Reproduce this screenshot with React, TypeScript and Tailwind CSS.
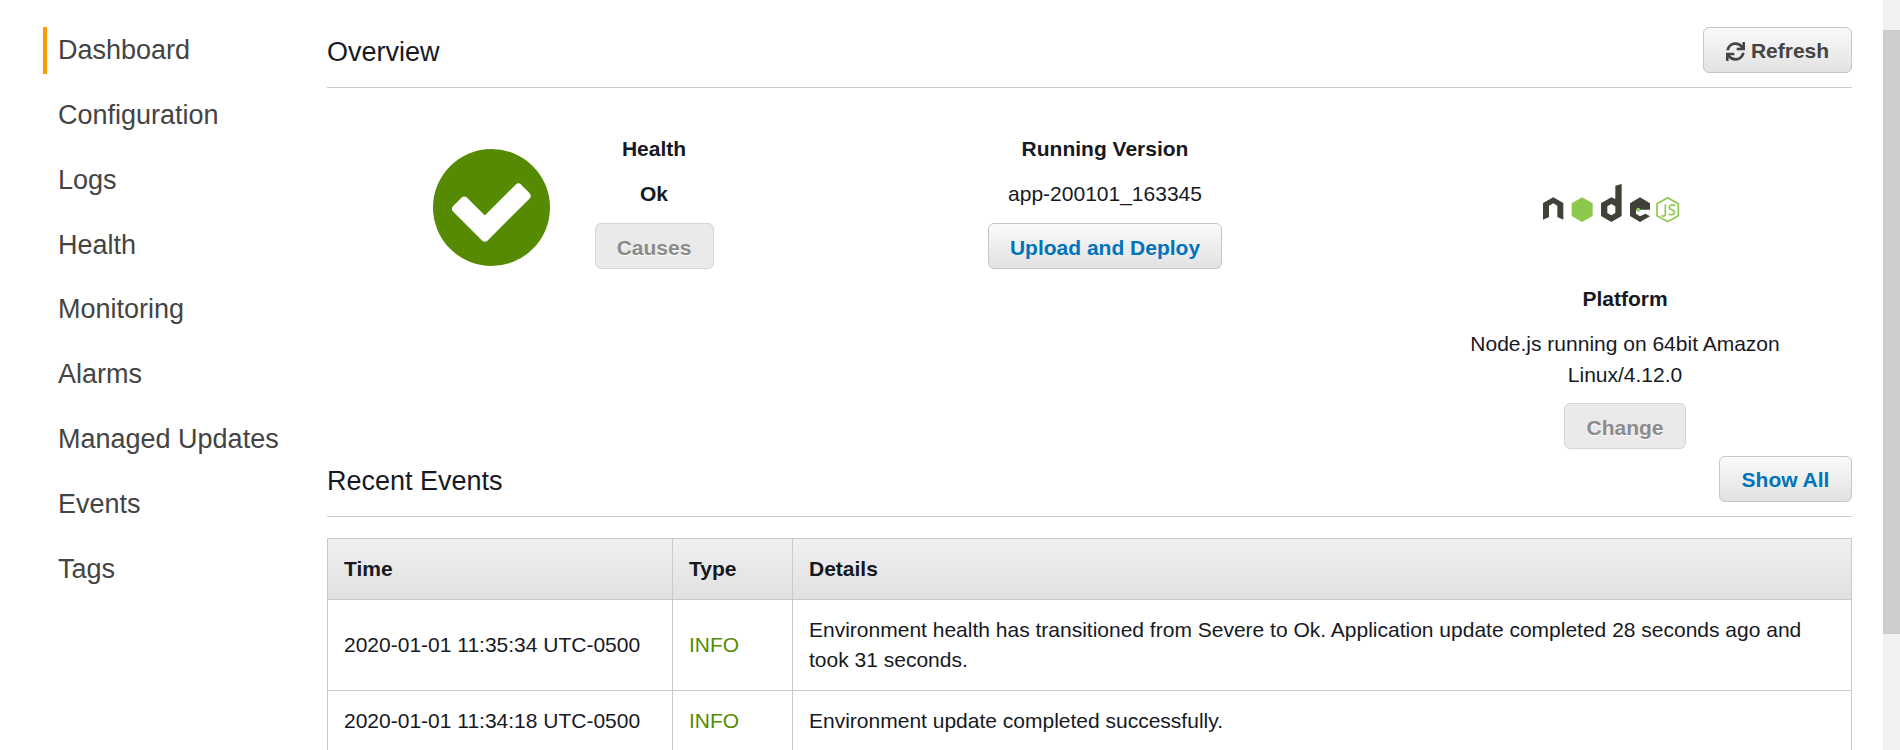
import { FaSync } from "react-icons/fa";

const navItems = ["Dashboard", "Configuration", "Logs", "Health", "Monitoring", "Alarms", "Managed Updates", "Events", "Tags"];

const events = [
    { time: "2020-01-01 11:35:34 UTC-0500", type: "INFO", details: "Environment health has transitioned from Severe to Ok. Application update completed 28 seconds ago and took 31 seconds." },
    { time: "2020-01-01 11:34:18 UTC-0500", type: "INFO", details: "Environment update completed successfully." },
];

function Button({ children, className }: { children: React.ReactNode, className: string }) {
    return (
        <button className={`h-[46px] pt-[2px] flex items-center justify-center rounded-[6px] border border-[#c6c6c6] bg-gradient-to-b from-[#fafafa] to-[#e2e2e2] text-[21px] font-bold ${className}`}>
            {children}
        </button>
    )
}

function DisabledButton({ label, className }: { label: string, className: string }) {
    return (
        <button className={`h-[46px] pt-[2px] flex items-center justify-center rounded-[6px] border border-[#d5d5d5] bg-[#eaeaea] text-[21px] font-bold text-[#8b8b8b] [text-shadow:0_1px_1px_#ffffff] ${className}`}>
            {label}
        </button>
    )
}

function HealthIcon() {
    return (
        <svg viewBox="98 88 350 350" className="w-[117px] h-[117px]">
            <circle cx="273" cy="263" r="175" fill="#568a03" />
            <polygon points="167,267 191.5,242.5 253,304 353.5,203.5 378,228 253,353" fill="#fff" stroke="#fff" strokeWidth="24" strokeLinejoin="round" />
        </svg>
    )
}

function NodeLogo() {
    return (
        <svg viewBox="120 40 420 120" className="w-[140px] h-[40px] blur-[0.4px]">
            <path d="M129 150V100L160 83L190 100V150L172 142V108L160 101L147 108V142Z" fill="#404137" />
            <path d="M246 83L278 101V139L246 157L215 139V101Z" fill="#8cc84b" />
            <path fillRule="evenodd" d="M365 43V139L334 157L303 139V101L334 83L346 88V48ZM334 103L322 110V130L334 137L346 130V110Z" fill="#404137" />
            <path d="M450 120V101L420 83L390 101V139L420 157L450 140L436 132L420 140L408 132V120Z" fill="#404137" />
            <circle cx="415" cy="120" r="6" fill="#8cc84b" />
            <path d="M503 84L535 102V138L503 156L471 138V102Z" fill="none" stroke="#8cc84b" strokeWidth="5" />
            <path d="M496 104V134Q496 142 484 138M526 108Q510 102 508 112Q508 119 517 121Q526 124 522 132Q516 138 506 133" fill="none" stroke="#8cc84b" strokeWidth="5" />
        </svg>
    )
}

function SectionHeader({ title, children }: { title: string, children: React.ReactNode }) {
    return (
        <div className="flex justify-between items-center pb-[14px] border-b border-[#cacaca]">
            <h2 className="pt-[5px] text-[27px] text-[#16191f]">{title}</h2>
            {children}
        </div>
    )
}

export default function App() {
    return (
        <div className="h-[750px] overflow-hidden flex bg-white font-['Liberation_Sans',Arial,sans-serif] text-[21px] text-[#16191f]">
            <nav className="w-[327px] shrink-0 pt-[27px] pl-[43px] flex flex-col gap-[17.8px]">
                {navItems.map((item, i) => (
                    <a key={item} className={`h-[47px] flex items-center pl-[11px] border-l-[4px] text-[27px] text-[#444] ${i === 0 ? "border-[#ff9900]" : "border-transparent"}`}>
                        {item}
                    </a>
                ))}
            </nav>

            <main className="w-[1525px] shrink-0 pt-[27px]">
                <SectionHeader title="Overview">
                    <Button className="w-[149px] gap-[6px] text-[#444]"><FaSync className="w-[19px] h-[19px]" />Refresh</Button>
                </SectionHeader>

                <div className="mt-[45px] flex text-center leading-[31px]">
                    <div className="ml-[73px] w-[182px] mt-[16px] flex justify-center">
                        <HealthIcon />
                    </div>
                    <div className="w-[144px] flex flex-col items-center">
                        <div className="font-bold">Health</div>
                        <div className="mt-[14px] font-bold">Ok</div>
                        <DisabledButton label="Causes" className="mt-[14px] w-[119px]" />
                    </div>
                    <div className="ml-[179px] w-[400px] flex flex-col items-center">
                        <div className="font-bold">Running Version</div>
                        <div className="mt-[14px]">app-200101_163345</div>
                        <Button className="mt-[14px] w-[234px] text-[#0073bb]">Upload and Deploy</Button>
                    </div>
                    <div className="ml-[120px] w-[400px] flex flex-col items-center">
                        <div className="mt-[50px] mr-[30px]"><NodeLogo /></div>
                        <div className="mt-[60px] font-bold">Platform</div>
                        <div className="mt-[14px] w-[340px]">Node.js running on 64bit Amazon Linux/4.12.0</div>
                        <DisabledButton label="Change" className="mt-[13px] w-[122px]" />
                    </div>
                </div>

                <div className="mt-[7px]">
                    <SectionHeader title="Recent Events">
                        <Button className="w-[133px] text-[#0073bb]">Show All</Button>
                    </SectionHeader>
                </div>

                <table className="mt-[21px] w-full table-fixed border-collapse text-left leading-[30px]">
                    <thead>
                        <tr className="h-[61px] bg-gradient-to-b from-[#f0f0f0] to-[#e0e0e0]">
                            <th className="w-[345px] px-4 border border-[#cacaca]">Time</th>
                            <th className="w-[120px] px-4 border border-[#cacaca]">Type</th>
                            <th className="px-4 border border-[#cacaca]">Details</th>
                        </tr>
                    </thead>
                    <tbody>
                        {events.map(event => (
                            <tr key={event.time}>
                                <td className="px-4 py-[15px] border border-[#cacaca]">{event.time}</td>
                                <td className="px-4 py-[15px] border border-[#cacaca] text-[#568a03]">{event.type}</td>
                                <td className="px-4 py-[15px] border border-[#cacaca]">{event.details}</td>
                            </tr>
                        ))}
                    </tbody>
                </table>
            </main>

            <div className="ml-auto w-[17px] shrink-0 bg-[#f1f1f1] pt-[30px]">
                <div className="h-[604px] bg-[#cdcdcd]" />
            </div>
        </div>
    )
}
